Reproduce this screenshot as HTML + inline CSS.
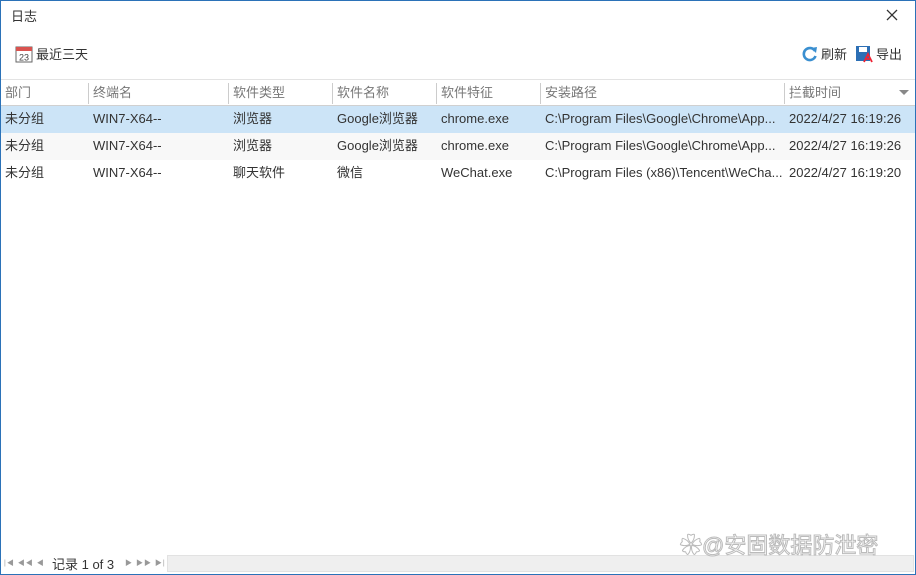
<!DOCTYPE html>
<html><head><meta charset="utf-8"><style>
*{margin:0;padding:0;box-sizing:border-box}
body{width:916px;height:575px;overflow:hidden;background:#fff;font-family:"Liberation Sans","Noto Sans CJK SC",sans-serif;font-size:13px;color:#333;position:relative}
.frame{position:absolute;inset:0;border:1px solid #2b72b8}
.t{position:absolute}
.hdr{position:absolute;left:1px;right:1px;top:79px;height:27px;border-top:1px solid #e3e3e3;border-bottom:1px solid #d0d0d0;color:#777}
.row{position:absolute;left:1px;right:1px;height:27px}
.c{position:absolute;top:0;line-height:26px;white-space:nowrap}
.sep{position:absolute;top:3px;width:1px;height:21px;background:#ccc}
</style></head><body>
<div class="frame"></div>
<div class="t" style="left:11px;top:6px;font-size:13px">日志</div>
<svg class="t" style="left:886px;top:9px" width="12" height="12"><path d="M1 1L11 11M11 1L1 11" stroke="#333" stroke-width="1.3"/></svg>
<svg class="t" style="left:15px;top:45px" width="18" height="18"><rect x="1" y="2" width="16" height="15" fill="#fff" stroke="#666"/><rect x="1" y="2" width="16" height="4" fill="#d9534f"/><text x="9" y="15.5" font-size="9" text-anchor="middle" fill="#444" font-family="Liberation Sans">23</text></svg>
<div class="t" style="left:36px;top:44px;font-size:13px">最近三天</div>
<svg class="t" style="left:801px;top:45px" width="17" height="17"><path d="M14 6A6 6 0 1 0 14.5 11" fill="none" stroke="#3a8fd0" stroke-width="2.6"/><path d="M10 3L16 2L15 8Z" fill="#3a8fd0"/></svg>
<div class="t" style="left:821px;top:44px;font-size:13px">刷新</div>
<svg class="t" style="left:855px;top:45px" width="18" height="18"><rect x="1" y="1" width="14" height="15" fill="#2c6fb5"/><rect x="4" y="2" width="8" height="5" fill="#fff"/><path d="M9 17L13 9L17 17M11 14H16" stroke="#e23" stroke-width="1.8" fill="none"/></svg>
<div class="t" style="left:876px;top:44px;font-size:13px">导出</div>
<div class="hdr">
<div class="c" style="left:4px">部门</div>
<div class="sep" style="left:87px"></div><div class="c" style="left:92px">终端名</div>
<div class="sep" style="left:227px"></div><div class="c" style="left:232px">软件类型</div>
<div class="sep" style="left:331px"></div><div class="c" style="left:336px">软件名称</div>
<div class="sep" style="left:435px"></div><div class="c" style="left:440px">软件特征</div>
<div class="sep" style="left:539px"></div><div class="c" style="left:544px">安装路径</div>
<div class="sep" style="left:783px"></div><div class="c" style="left:788px">拦截时间</div>
<svg style="position:absolute;left:898px;top:10px" width="10" height="6"><path d="M0 0H10L5 5Z" fill="#888"/></svg>
</div>
<div class="row" style="top:106px;background:#cce4f7">
<div class="c" style="left:4px">未分组</div><div class="c" style="left:92px">WIN7-X64--</div><div class="c" style="left:232px">浏览器</div><div class="c" style="left:336px">Google浏览器</div><div class="c" style="left:440px">chrome.exe</div><div class="c" style="left:544px">C:\Program Files\Google\Chrome\App...</div><div class="c" style="left:788px">2022/4/27 16:19:26</div></div>
<div class="row" style="top:133px;background:#f8f8f8">
<div class="c" style="left:4px">未分组</div><div class="c" style="left:92px">WIN7-X64--</div><div class="c" style="left:232px">浏览器</div><div class="c" style="left:336px">Google浏览器</div><div class="c" style="left:440px">chrome.exe</div><div class="c" style="left:544px">C:\Program Files\Google\Chrome\App...</div><div class="c" style="left:788px">2022/4/27 16:19:26</div></div>
<div class="row" style="top:160px">
<div class="c" style="left:4px">未分组</div><div class="c" style="left:92px">WIN7-X64--</div><div class="c" style="left:232px">聊天软件</div><div class="c" style="left:336px">微信</div><div class="c" style="left:440px">WeChat.exe</div><div class="c" style="left:544px">C:\Program Files (x86)\Tencent\WeCha...</div><div class="c" style="left:788px">2022/4/27 16:19:20</div></div>
<div class="t" style="left:4px;top:558px;font-size:7px;color:#999;letter-spacing:1px">|◀ ◀◀ ◀</div>
<div class="t" style="left:52px;top:554px;font-size:13px">记录 1 of 3</div>
<div class="t" style="left:125px;top:558px;font-size:7px;color:#999;letter-spacing:1px">▶ ▶▶ ▶|</div>
<div class="t" style="left:167px;top:555px;width:747px;height:17px;background:#efefef;border:1px solid #e2e2e2"></div>
<div class="t" style="left:680px;top:528px;font-size:22px;color:#fff;-webkit-text-stroke:1px #bbb">✿@安固数据防泄密</div>
</body></html>
